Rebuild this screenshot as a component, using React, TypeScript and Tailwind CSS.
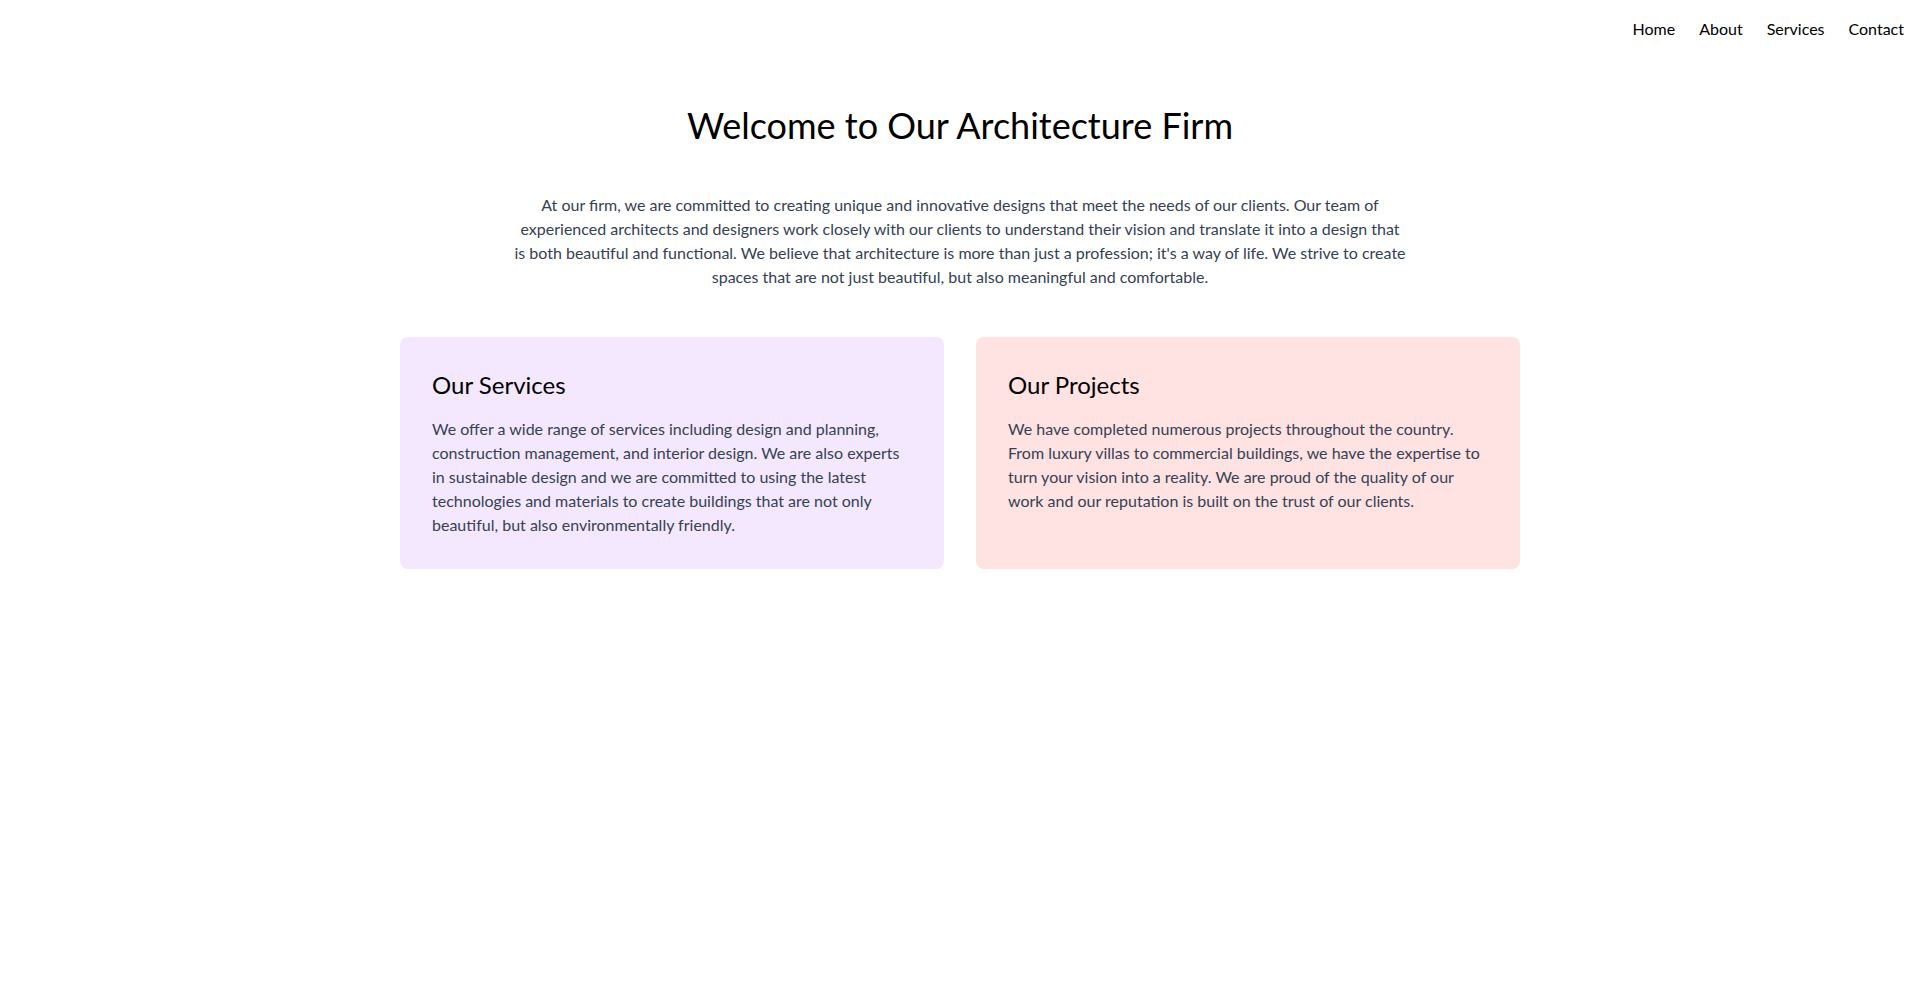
import React from 'react';

const navLinks = ['Home', 'About', 'Services', 'Contact'];

export default function App() {
    return (
        <div className="min-h-screen bg-white text-black pt-px" style={{ fontFamily: '"Segoe UI", Lato, "Open Sans", sans-serif' }}>
            {/* Top nav */}
            <nav className="flex justify-end p-4">
                <ul className="flex gap-6 text-base">
                    {navLinks.map(link => (
                        <li key={link}>
                            <a href="#" className="text-black">{link}</a>
                        </li>
                    ))}
                </ul>
            </nav>

            <main className="max-w-6xl mx-auto px-4 py-12">
                <h1 className="text-4xl text-center mb-12">Welcome to Our Architecture Firm</h1>
                <p className="max-w-[892px] mx-auto text-center text-base text-gray-700 mb-12">
                    At our firm, we are committed to creating unique and innovative designs that meet the needs of our clients. Our team of experienced architects and designers work closely with our clients to understand their vision and translate it into a design that is both beautiful and functional. We believe that architecture is more than just a profession; it's a way of life. We strive to create spaces that are not just beautiful, but also meaningful and comfortable.
                </p>

                <div className="grid grid-cols-2 gap-8">
                    <div className="bg-purple-100 rounded-lg p-8">
                        <h2 className="text-2xl mb-4">Our Services</h2>
                        <p className="text-base text-gray-700">
                            We offer a wide range of services including design and planning, construction management, and interior design. We are also experts in sustainable design and we are committed to using the latest technologies and materials to create buildings that are not only beautiful, but also environmentally friendly.
                        </p>
                    </div>
                    <div className="bg-red-100 rounded-lg p-8">
                        <h2 className="text-2xl mb-4">Our Projects</h2>
                        <p className="text-base text-gray-700">
                            We have completed numerous projects throughout the country. From luxury villas to commercial buildings, we have the expertise to turn your vision into a reality. We are proud of the quality of our work and our reputation is built on the trust of our clients.
                        </p>
                    </div>
                </div>
            </main>
        </div>
    );
}
